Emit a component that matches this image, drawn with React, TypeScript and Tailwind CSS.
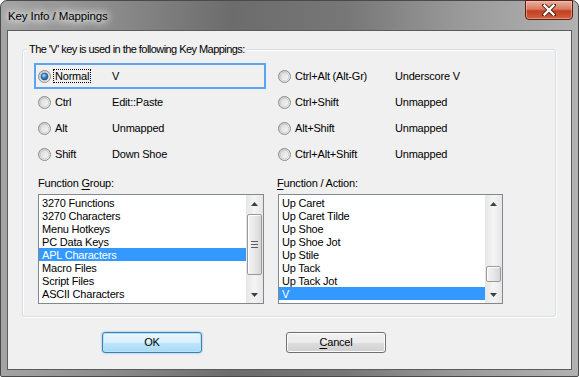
import React from "react";

const font = "font-['Liberation_Sans',Arial,sans-serif]";

function Radio({ checked }: { checked?: boolean }) {
  return (
    <svg width="13" height="13" viewBox="0 0 13 13" className="shrink-0">
      <defs>
        <linearGradient id="rbOuter" x1="0" y1="0" x2="1" y2="1">
          <stop offset="0" stopColor="#c9c9c9" />
          <stop offset="1" stopColor="#f6f6f6" />
        </linearGradient>
        <linearGradient id="rbInner" x1="0" y1="0" x2="1" y2="1">
          <stop offset="0" stopColor="#d8d8d8" />
          <stop offset="1" stopColor="#f8f8f8" />
        </linearGradient>
        <radialGradient id="rbDot" cx="0.4" cy="0.35" r="0.7">
          <stop offset="0" stopColor="#b9e6fb" />
          <stop offset="0.45" stopColor="#3f8ed0" />
          <stop offset="1" stopColor="#1c4f87" />
        </radialGradient>
      </defs>
      <circle cx="6.5" cy="6.5" r="6" fill="url(#rbOuter)" stroke="#8b8b8b" />
      <circle cx="6.5" cy="6.5" r="4.2" fill="url(#rbInner)" stroke="#c4c4c4" strokeWidth="0.7" />
      {checked && <circle cx="6.5" cy="6.5" r="3.4" fill="url(#rbDot)" stroke="#1d3f66" strokeWidth="0.6" />}
    </svg>
  );
}

type Mapping = { key: string; value: string; checked?: boolean };

const leftMappings: Mapping[] = [
  { key: "Normal", value: "V", checked: true },
  { key: "Ctrl", value: "Edit::Paste" },
  { key: "Alt", value: "Unmapped" },
  { key: "Shift", value: "Down Shoe" },
];

const rightMappings: Mapping[] = [
  { key: "Ctrl+Alt (Alt-Gr)", value: "Underscore V" },
  { key: "Ctrl+Shift", value: "Unmapped" },
  { key: "Alt+Shift", value: "Unmapped" },
  { key: "Ctrl+Alt+Shift", value: "Unmapped" },
];

function MappingRow({ m, focused, labelW }: { m: Mapping; focused?: boolean; labelW: string }) {
  return (
    <div
      className={
        focused
          ? "h-[26px] w-[232px] flex items-center border-2 border-[#5aa5f0] px-[2px]"
          : "h-[26px] flex items-center border-2 border-transparent px-[2px]"
      }
    >
      <Radio checked={m.checked} />
      <div className={`ml-[2px] ${labelW}`}>
        <span className={focused ? "border border-dotted border-black px-[1px]" : "border border-transparent px-[1px]"}>
          {m.key}
        </span>
      </div>
      <span>{m.value}</span>
    </div>
  );
}

function Arrow({ up }: { up?: boolean }) {
  return (
    <div className="h-[17px] flex items-center justify-center">
      <svg width="7" height="4" viewBox="0 0 7 4">
        {up ? <path d="M0 4 L3.5 0 L7 4 Z" fill="#404040" /> : <path d="M0 0 L3.5 4 L7 0 Z" fill="#404040" />}
      </svg>
    </div>
  );
}

function ScrollBar({ thumbClass, grip }: { thumbClass: string; grip?: boolean }) {
  return (
    <div className="w-[17px] flex flex-col bg-gradient-to-r from-[#e6e6e6] via-[#f4f4f4] to-[#e6e6e6]">
      <Arrow up />
      <div className="flex-1 flex flex-col">
        <div
          className={`${thumbClass} mx-[1px] rounded-[2px] border border-[#999] bg-gradient-to-r from-[#f4f4f4] via-[#e8e8e8] to-[#d6d6d6] shadow-[inset_1px_1px_0_#fff] flex flex-col items-center justify-center gap-[2px]`}
        >
          {grip && (
            <>
              <div className="w-[7px] h-px bg-[#5c5c5c]" />
              <div className="w-[7px] h-px bg-[#5c5c5c]" />
              <div className="w-[7px] h-px bg-[#5c5c5c]" />
            </>
          )}
        </div>
      </div>
      <Arrow />
    </div>
  );
}

function ListBox({ items, selected, width, thumbClass, grip }: { items: string[]; selected: number; width: string; thumbClass: string; grip?: boolean }) {
  return (
    <div className={`${width} h-[110px] border border-[#828790] bg-white flex`}>
      <div className="flex-1 pt-[1px]">
        {items.map((it, i) => (
          <div
            key={it}
            className={
              i === selected
                ? "h-[13px] leading-[14px] pl-[3px] bg-[#3399ff] text-white"
                : "h-[13px] leading-[14px] pl-[3px] text-black"
            }
          >
            {it}
          </div>
        ))}
      </div>
      <ScrollBar thumbClass={thumbClass} grip={grip} />
    </div>
  );
}

export default function App() {
  return (
    <div className={`${font} text-[11px] tracking-[-0.2px] text-black w-[579px] h-[377px] overflow-hidden`}>
      <div className="w-[579px] h-[377px] rounded-t-[7px] rounded-b-[2px] border border-[#4a4a4a] bg-[linear-gradient(90deg,#a4a4a4_0%,#8a8a8a_20%,#6c6c6c_40%,#777_60%,#9a9a9a_80%,#b2b2b2_100%)] flex flex-col">
        {/* Title bar */}
        <div className="h-[29px] flex items-start justify-between">
          <div className="pl-[7px] pt-[8px] text-[11.5px] leading-[14px] tracking-[-0.1px] text-black [text-shadow:0_0_6px_#fff,0_0_10px_#fff,0_0_14px_#fff]">
            Key Info / Mappings
          </div>
          <div className="mr-[5px] -mt-px w-[48px] h-[20px] rounded-b-[4px] border border-[#5b1f14] bg-[linear-gradient(180deg,#eab0a0_0%,#d97b62_45%,#c4401f_55%,#d0603f_100%)] shadow-[inset_0_0_0_1px_rgba(255,200,190,0.5)] flex items-center justify-center">
            <svg width="14" height="12" viewBox="0 0 14 12">
              <path d="M2 1 L12 11 M12 1 L2 11" stroke="#4a1a10" strokeWidth="4" strokeLinecap="round" />
              <path d="M2.5 1.5 L11.5 10.5 M11.5 1.5 L2.5 10.5" stroke="#fff" strokeWidth="2.4" strokeLinecap="square" />
            </svg>
          </div>
        </div>

        {/* Client area */}
        <div className="mx-[6px] mb-[6px] flex-1 border border-[#5c5c5c] bg-[#f0f0f0] flex flex-col">
          {/* Group box */}
          <div className="mt-[18px] ml-[14px] mr-[15px] h-[268px] rounded-[3px] border border-[#d5dfe5] shadow-[inset_1px_1px_0_#fff,1px_1px_0_#fff] px-[11px]">
            <div className="-mt-[8px] -ml-[7px] h-[14px] leading-[15px]">
              <span className="bg-[#f0f0f0] px-[2px] tracking-[-0.55px]">The 'V' key is used in the following Key Mappings:</span>
            </div>
            <div className="mt-[7px] flex">
              <div className="w-[240px] flex flex-col">
                {leftMappings.map((m, i) => (
                  <MappingRow key={m.key} m={m} focused={i === 0} labelW="w-[59px]" />
                ))}
              </div>
              <div className="flex flex-col">
                {rightMappings.map((m) => (
                  <MappingRow key={m.key} m={m} labelW="w-[102px]" />
                ))}
              </div>
            </div>
            <div className="mt-[9px] flex">
              <div className="w-[240px] pl-[4px]">
                <div className="h-[14px] leading-[15px]">
                  Function <span className="underline underline-offset-2">G</span>roup:
                </div>
                <div className="mt-[4px]">
                  <ListBox
                    items={["3270 Functions", "3270 Characters", "Menu Hotkeys", "PC Data Keys", "APL Characters", "Macro Files", "Script Files", "ASCII Characters"]}
                    selected={4}
                    width="w-[226px]"
                    thumbClass="mt-[2px] h-[61px]"
                    grip
                  />
                </div>
              </div>
              <div className="pl-[3px]">
                <div className="h-[14px] leading-[15px]">
                  <span className="underline underline-offset-2">F</span>unction / Action:
                </div>
                <div className="mt-[4px] ml-[1px]">
                  <ListBox
                    items={["Up Caret", "Up Caret Tilde", "Up Shoe", "Up Shoe Jot", "Up Stile", "Up Tack", "Up Tack Jot", "V"]}
                    selected={7}
                    width="w-[225px]"
                    thumbClass="mt-[54px] h-[16px]"
                  />
                </div>
              </div>
            </div>
          </div>

          {/* Buttons */}
          <div className="mt-[15px] ml-[94px] flex gap-[84px]">
            <button className="w-[100px] h-[21px] rounded-[3px] border border-[#3c7fb1] bg-[linear-gradient(180deg,#eaf6fd_0%,#d9f0fc_50%,#bee6fd_51%,#a7d9f5_100%)] shadow-[inset_0_0_0_1px_#b9e2f8,0_0_2px_#5bb0e8] text-[11px] leading-[19px]">
              OK
            </button>
            <button className="w-[100px] h-[21px] rounded-[3px] border border-[#707070] bg-[linear-gradient(180deg,#f2f2f2_0%,#ebebeb_50%,#dddddd_51%,#cfcfcf_100%)] shadow-[inset_0_0_0_1px_#fbfbfb] text-[11px] leading-[19px]">
              <span className="underline underline-offset-2">C</span>ancel
            </button>
          </div>
        </div>
      </div>
    </div>
  );
}
